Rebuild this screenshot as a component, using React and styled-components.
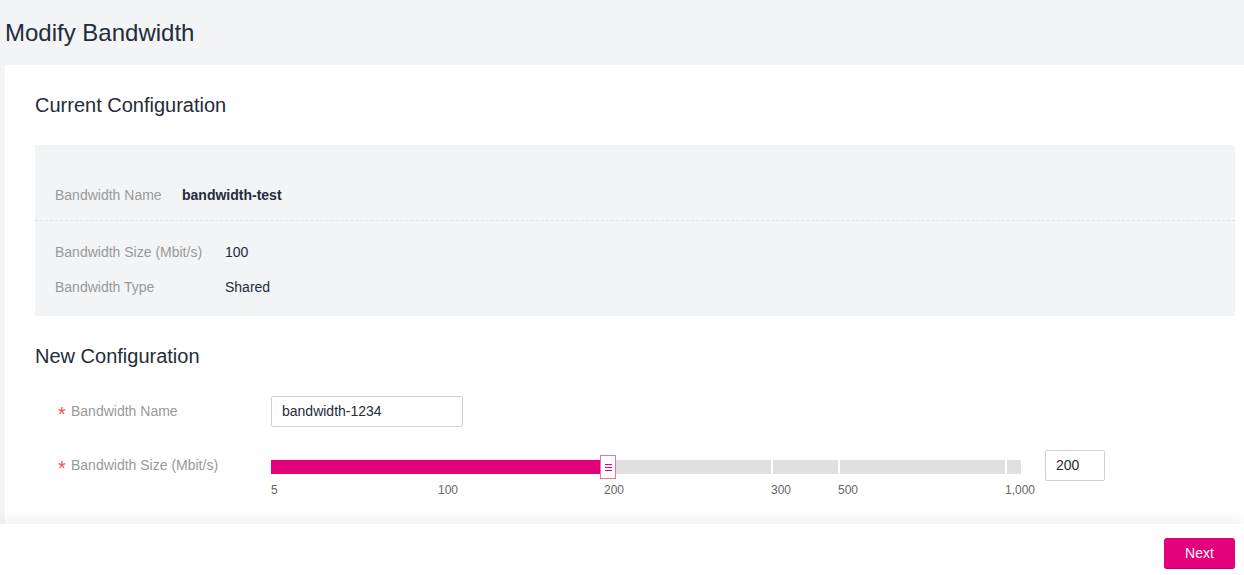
import React from 'react';
import styled, { createGlobalStyle } from 'styled-components';

const GlobalStyle = createGlobalStyle`
  html, body {
    margin: 0;
    padding: 0;
    background: #f3f4f6;
    font-family: "Liberation Sans", Arial, sans-serif;
    color: #333;
  }
  * {
    box-sizing: border-box;
  }
`;

const PINK = '#e3007b';

const Page = styled.div`
  display: flex;
  flex-direction: column;
  height: 575px;
  overflow: hidden;
`;

const Header = styled.div`
  height: 65px;
  flex-shrink: 0;
  display: flex;
  align-items: center;
  padding-left: 5px;
`;

const Title = styled.h1`
  margin: 0;
  font-size: 24px;
  font-weight: normal;
  color: #252b3a;
`;

const Panel = styled.div`
  flex: 1;
  min-height: 0;
  margin-left: 5px;
  background: #fff;
  padding: 28px 9px 0 30px;
  overflow: hidden;
`;

const SectionTitle = styled.h2`
  margin: 0 0 28px;
  font-size: 20px;
  line-height: 24px;
  font-weight: normal;
  color: #252b3a;
`;

const InfoBox = styled.div`
  background: #f3f4f6;
  margin-bottom: 28px;
`;

const InfoGroup = styled.div`
  display: grid;
  grid-template-columns: ${p => p.$labelWidth}px 1fr;
  row-gap: 15px;
  padding: ${p => p.$pad};
  padding-left: 20px;
  border-bottom: ${p => (p.$divided ? '1px dashed #e1e3e8' : 'none')};
`;

const InfoLabel = styled.div`
  font-size: 14px;
  line-height: 20px;
  color: #999;
`;

const InfoValue = styled.div`
  font-size: 14px;
  line-height: 20px;
  color: #252b3a;
  font-weight: ${p => (p.$bold ? 'bold' : 'normal')};
`;

const Form = styled.div`
  display: flex;
  flex-direction: column;
  gap: 23px;
  padding-left: 23px;
`;

const FormRow = styled.div`
  display: flex;
  align-items: flex-start;
`;

const FormLabel = styled.div`
  width: 213px;
  height: 31px;
  flex-shrink: 0;
  font-size: 14px;
  line-height: 31px;
  color: #999;
`;

const Star = styled.span`
  color: #f5504f;
  display: inline-block;
  width: 13px;
  font-size: 20px;
  line-height: 0;
  vertical-align: -5px;
`;

const TextInput = styled.div`
  width: ${p => p.$width}px;
  height: 31px;
  border: 1px solid #cfd0d3;
  border-radius: 2px;
  padding: 0 10px;
  font-size: 14px;
  line-height: 29px;
  color: #252b3a;
  background: #fff;
`;

const SliderWrap = styled.div`
  display: flex;
  align-items: flex-start;
  gap: 24px;
`;

const Slider = styled.div`
  width: 750px;
  padding-top: 10px;
`;

const Track = styled.div`
  position: relative;
  display: flex;
  gap: 2px;
  height: 14px;
`;

const Segment = styled.div`
  width: ${p => p.$w}px;
  height: 14px;
  background: #e0e0e0;
`;

const Fill = styled.div`
  position: absolute;
  left: 0;
  top: 0;
  height: 14px;
  background: ${PINK};
`;

const Handle = styled.div`
  position: absolute;
  top: -5px;
  width: 16px;
  height: 24px;
  background: #fff;
  border: 1px solid #f070ad;
  display: flex;
  align-items: center;
  justify-content: center;
`;

const Ticks = styled.div`
  position: relative;
  height: 14px;
  margin-top: 9px;
`;

const Tick = styled.span`
  position: absolute;
  top: 0;
  font-size: 12px;
  line-height: 14px;
  color: #666;
  white-space: nowrap;
`;

const Footer = styled.div`
  height: 51px;
  flex-shrink: 0;
  background: #fff;
  display: flex;
  align-items: flex-start;
  justify-content: flex-end;
  padding: 14px 9px 0 0;
  box-shadow: 0 -6px 12px rgba(0, 0, 0, 0.05);
  position: relative;
`;

const Button = styled.button`
  width: 71px;
  height: 31px;
  border: none;
  border-bottom: 1px solid #b8005f;
  border-radius: 3px;
  background: ${PINK};
  color: #fff;
  font-family: "Liberation Sans", Arial, sans-serif;
  font-size: 14px;
  cursor: pointer;
`;

const segments = [500, 65, 165, 14];
const ticks = [
  { label: '5', at: 0 },
  { label: '100', at: 167 },
  { label: '200', at: 333 },
  { label: '300', at: 500 },
  { label: '500', at: 567 },
  { label: '1,000', at: 734 },
];
const fillWidth = 329;

const GripIcon = () => (
  <svg width="7" height="7" viewBox="0 0 7 7">
    <path d="M0 0.5H7M0 3.5H7M0 6.5H7" stroke={PINK} strokeWidth="1" />
  </svg>
);

export default function App() {
  return (
    <>
      <GlobalStyle />
      <Page>
        <Header>
          <Title>Modify Bandwidth</Title>
        </Header>
        <Panel>
          <SectionTitle>Current Configuration</SectionTitle>
          <InfoBox>
            <InfoGroup $labelWidth={127} $pad="40px 0 15px" $divided>
              <InfoLabel>Bandwidth Name</InfoLabel>
              <InfoValue $bold>bandwidth-test</InfoValue>
            </InfoGroup>
            <InfoGroup $labelWidth={170} $pad="21px 0 19px">
              <InfoLabel>Bandwidth Size (Mbit/s)</InfoLabel>
              <InfoValue>100</InfoValue>
              <InfoLabel>Bandwidth Type</InfoLabel>
              <InfoValue>Shared</InfoValue>
            </InfoGroup>
          </InfoBox>
          <SectionTitle>New Configuration</SectionTitle>
          <Form>
            <FormRow>
              <FormLabel><Star>*</Star>Bandwidth Name</FormLabel>
              <TextInput $width={192}>bandwidth-1234</TextInput>
            </FormRow>
            <FormRow>
              <FormLabel><Star>*</Star>Bandwidth Size (Mbit/s)</FormLabel>
              <SliderWrap>
                <Slider>
                  <Track>
                    {segments.map((w, i) => (
                      <Segment key={i} $w={w} />
                    ))}
                    <Fill style={{ width: fillWidth }} />
                    <Handle style={{ left: fillWidth }}>
                      <GripIcon />
                    </Handle>
                  </Track>
                  <Ticks>
                    {ticks.map(t => (
                      <Tick key={t.label} style={{ left: t.at }}>{t.label}</Tick>
                    ))}
                  </Ticks>
                </Slider>
                <TextInput $width={60}>200</TextInput>
              </SliderWrap>
            </FormRow>
          </Form>
        </Panel>
        <Footer>
          <Button>Next</Button>
        </Footer>
      </Page>
    </>
  );
}
